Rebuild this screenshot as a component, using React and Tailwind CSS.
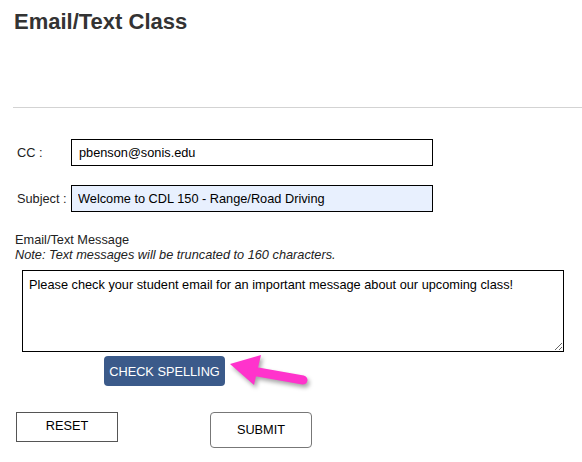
export default function App() {
  return (
    <div className="relative w-[582px] h-[462px] bg-white font-['Liberation_Sans',Arial,sans-serif] text-[12.75px] text-[#222] overflow-hidden">
      <h1 className="pl-[14px] pt-[9px] text-[22px] leading-[26px] font-bold text-[#333]">
        Email/Text Class
      </h1>
      <div className="ml-[13px] mt-[72px] h-px bg-[#d3d3d3]" />

      {/* CC */}
      <div className="mt-[31px] pl-[17px] flex items-center">
        <span className="w-[54px] leading-[15px]">CC :</span>
        <input
          type="text"
          defaultValue="pbenson@sonis.edu"
          className="w-[362px] h-[27px] border border-black bg-white px-[7px] text-[12.75px] text-black outline-none"
        />
      </div>

      {/* Subject */}
      <div className="mt-[19px] pl-[17px] flex items-center">
        <span className="w-[54px] leading-[15px]">Subject :</span>
        <input
          type="text"
          defaultValue="Welcome to CDL 150 - Range/Road Driving"
          className="w-[362px] h-[27px] border border-black bg-[#e8f0fe] px-[6px] text-[12.75px] text-black outline-none"
        />
      </div>

      {/* Message */}
      <div className="mt-[20px] pl-[15px] leading-[15px]">
        <div>Email/Text Message</div>
        <div className="italic">Note: Text messages will be truncated to 160 characters.</div>
      </div>
      <textarea
        defaultValue="Please check your student email for an important message about our upcoming class!"
        className="block ml-[22px] mt-[8px] w-[542px] h-[82px] border border-black px-[6px] pt-[6px] text-[12.75px] leading-[15px] text-black outline-none"
      />

      <button className="block ml-[104px] mt-[4px] w-[121px] h-[30px] rounded-[4px] bg-[#3b5a8a] text-white text-[12.75px] leading-[15px]">
        CHECK SPELLING
      </button>

      <div className="mt-[26px] flex items-start">
        <button className="ml-[16px] w-[102px] h-[30px] border border-[#555] bg-white text-[12.75px] text-black pb-[2px]">
          RESET
        </button>
        <button className="ml-[92px] w-[102px] h-[36px] rounded-[4px] border border-[#777] bg-white text-[12.75px] text-black">
          SUBMIT
        </button>
      </div>

      {/* annotation arrow */}
      <svg
        className="absolute left-0 top-0 pointer-events-none drop-shadow-[2px_3px_2px_rgba(0,0,0,0.35)]"
        width="582"
        height="462"
        viewBox="0 0 582 462"
      >
        <polygon points="230,364 261,355 254,385" fill="#ff33cc" />
        <line x1="252" y1="371" x2="303" y2="380" stroke="#ff33cc" strokeWidth="9" strokeLinecap="round" />
      </svg>
    </div>
  );
}
